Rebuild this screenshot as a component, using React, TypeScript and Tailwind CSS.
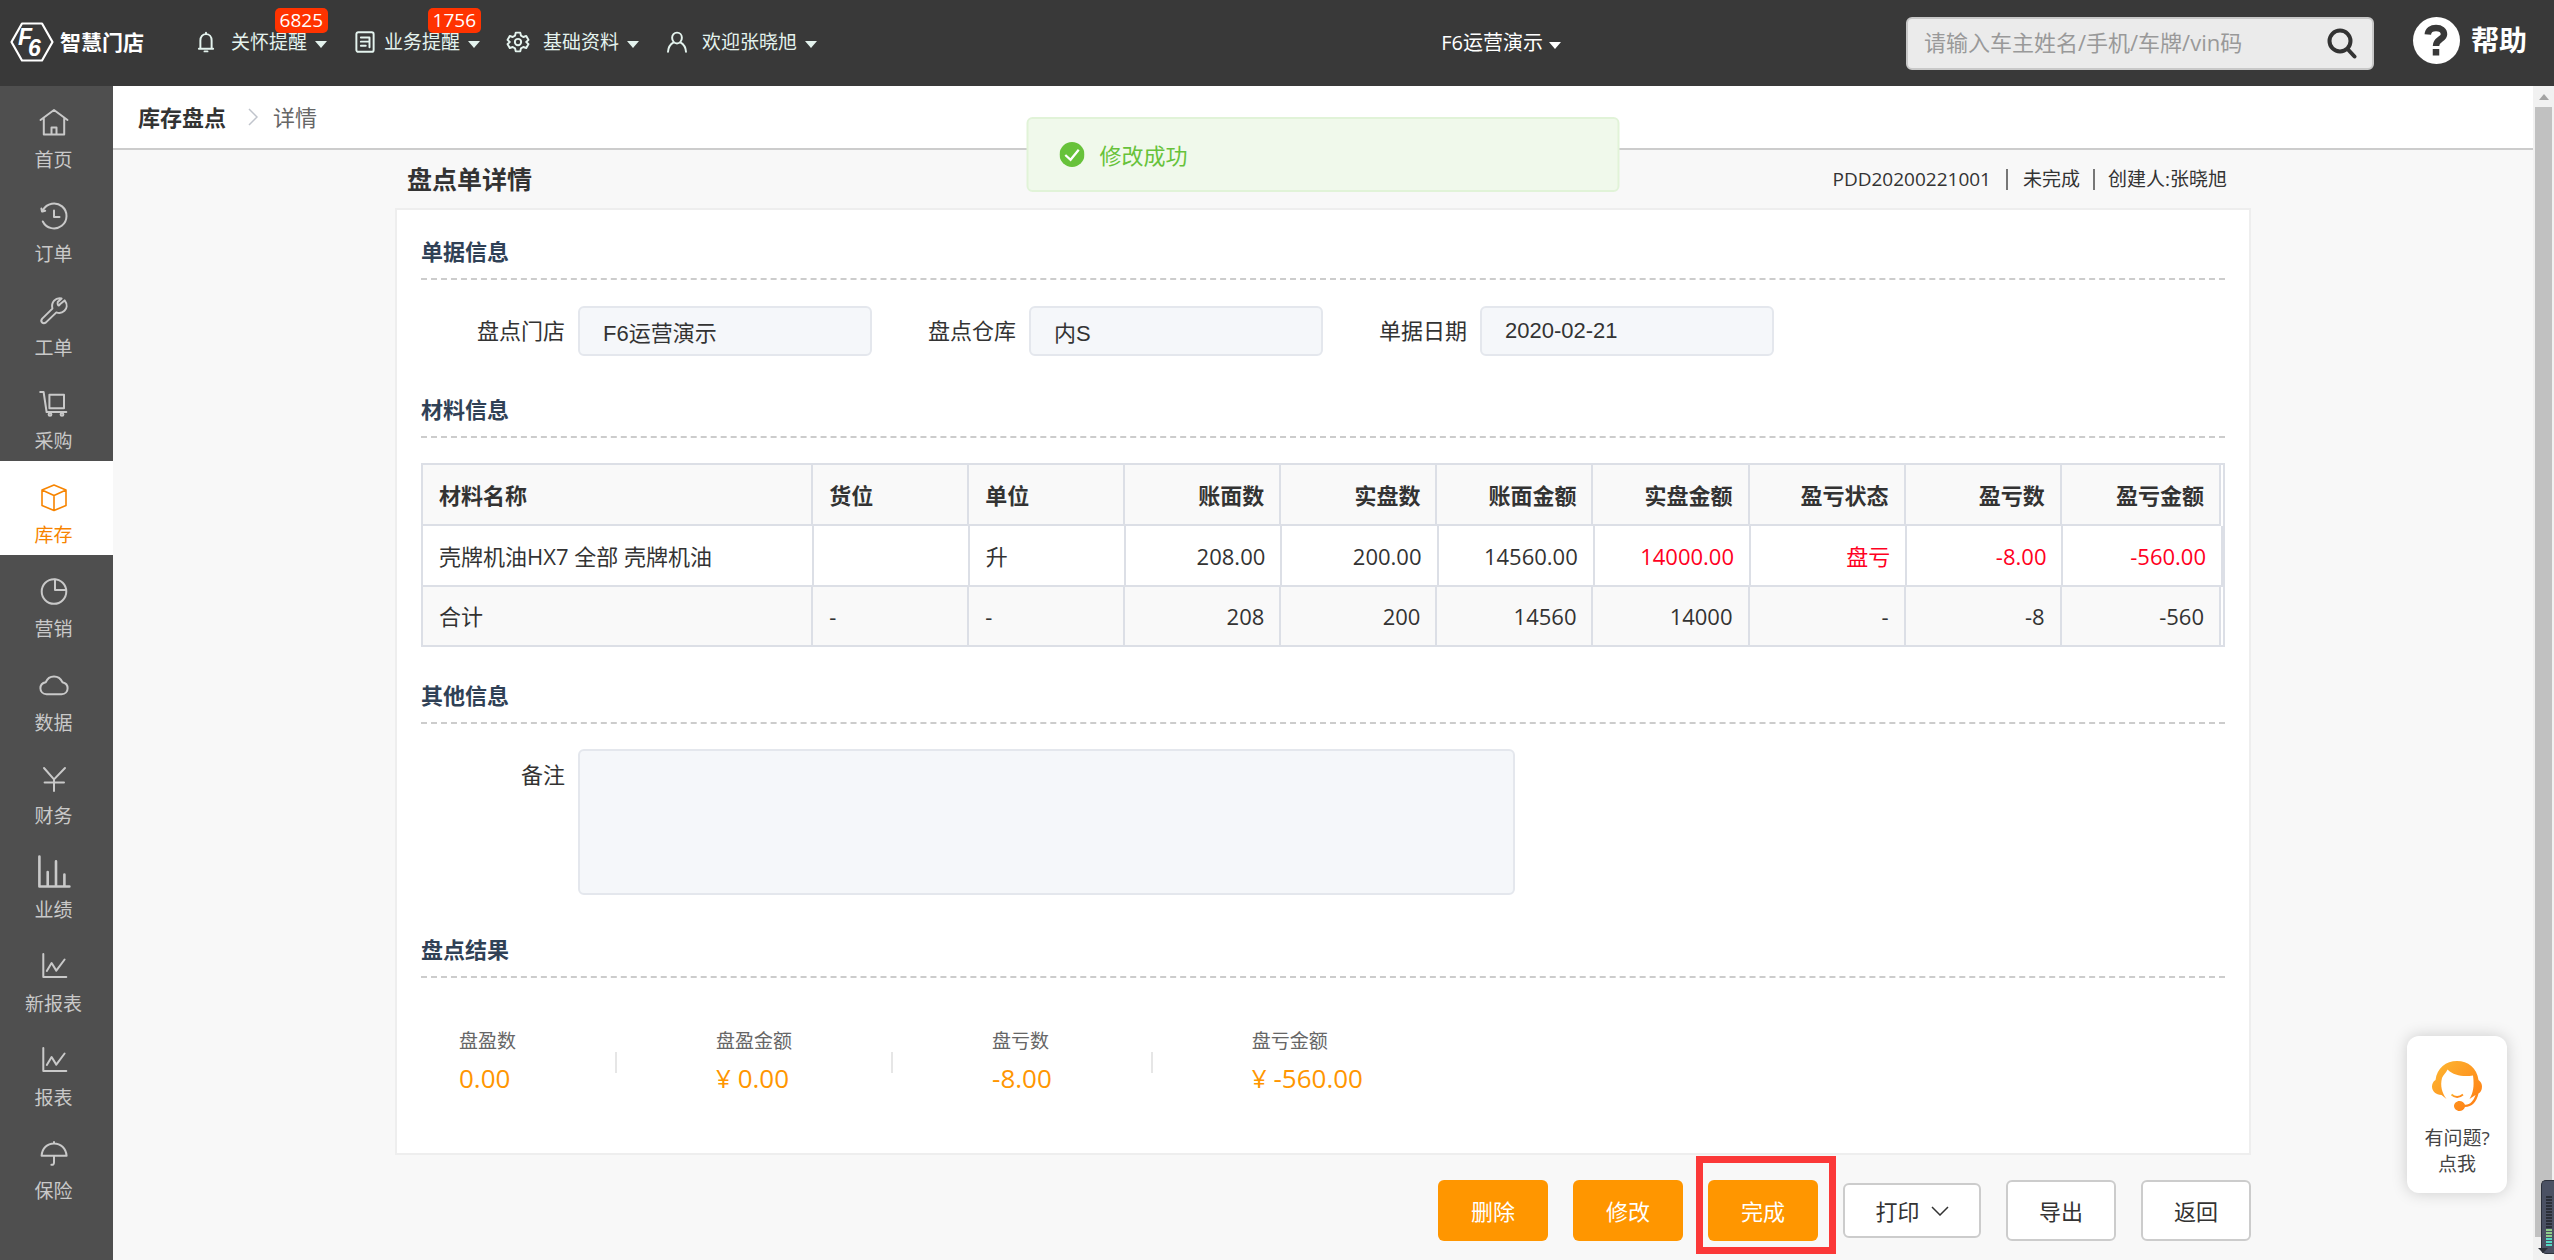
import type { ReactNode } from "react";

const FONT = "font-['Open_Sans','Noto_Sans_CJK_SC',sans-serif]";
const ARIAL = "font-['Liberation_Sans','Noto_Sans_CJK_SC',sans-serif]";

function Line({ children, size = "size-8", width = 2 }: { children: ReactNode; size?: string; width?: number }) {
  return (
    <svg
      viewBox="0 0 32 32"
      className={`${size} shrink-0 overflow-visible`}
      fill="none"
      stroke="currentColor"
      strokeWidth={width}
      strokeLinecap="round"
      strokeLinejoin="round"
      aria-hidden="true"
    >
      {children}
    </svg>
  );
}

function Caret() {
  return <span className="ml-2 mt-1 border-x-[6px] border-t-[7px] border-x-transparent border-t-current" />;
}

const lineChart = (
  <Line>
    <path d="M5.3 3V26H28.3M8.8 20L13.6 12L18.3 19.6L26.6 8.5" />
  </Line>
);

const sideItems: { label: string; icon: ReactNode; active?: boolean }[] = [
  {
    label: "首页",
    icon: (
      <Line>
        <path d="M2.5 13L16 3L29.5 13M5.8 11V27.5H26.2V11M13.5 27.5V20.5H18.5V27.5" />
      </Line>
    ),
  },
  {
    label: "订单",
    icon: (
      <Line>
        <path d="M4.8 20.5A12.5 12.5 0 1 0 5 9M4 10.5L3.4 7.6M4.4 10.6L7.2 9.8M16 9.5V16H21.5" />
      </Line>
    ),
  },
  {
    label: "工单",
    icon: (
      <Line>
        <path d="M22.2 9L26.6 5.4C29.8 9.5 28.8 13.6 26.4 15.8C24.2 17.9 21 18.4 18.4 17.4L8 27.4C5 29.6 1.8 26.6 4.2 23.6L14.4 13.6C12.8 7.2 17.6 2 23.6 3.4L19.8 7C19 10.4 20.6 11.6 22.2 9Z" />
      </Line>
    ),
  },
  {
    label: "采购",
    icon: (
      <Line>
        <path d="M2.2 4H5.6L8.6 24H28.3M11.4 6.8H26V20.2H11.4Z" />
        <circle cx="12" cy="26.4" r="1.4" />
        <circle cx="24" cy="26.4" r="1.4" />
      </Line>
    ),
  },
  {
    label: "库存",
    active: true,
    icon: (
      <Line width={1.6}>
        <path d="M16 3L28 8V23.5L16 28.5L4 23.5V8ZM4 8L16 13.5L28 8M16 13.5V28.5" />
      </Line>
    ),
  },
  {
    label: "营销",
    icon: (
      <Line>
        <circle cx="16" cy="15.5" r="12.3" />
        <path d="M17 3.4V14H28" />
      </Line>
    ),
  },
  {
    label: "数据",
    icon: (
      <Line>
        <path d="M8.6 24.2H23.6C27.4 24.2 29.6 21.4 29.6 18.2C29.6 15 27.4 12.8 24.4 12.2C22.8 8.6 19.8 6.4 16 6.4C12.2 6.4 9.2 8.6 7.8 12.2C4.6 12.8 2.4 15 2.4 18.2C2.4 21.4 4.8 24.2 8.6 24.2Z" />
      </Line>
    ),
  },
  {
    label: "财务",
    icon: (
      <Line>
        <path d="M6 5L16 16.4L27 5M6.6 19.5H26M16 16.4V28" />
      </Line>
    ),
  },
  {
    label: "业绩",
    icon: (
      <Line width={2.6}>
        <path d="M1.4 -0.5V29.5H31.4M9.7 15V29.5M18 4.4V29.5M26.4 17.5V29.5" />
      </Line>
    ),
  },
  { label: "新报表", icon: lineChart },
  { label: "报表", icon: lineChart },
  {
    label: "保险",
    icon: (
      <Line>
        <path d="M3.6 17.8C4 10.4 9.4 5.4 16 5.4S28 10.4 28.6 17.8ZM16 5.2V4M16 17.8V24.5C16 26.4 15 27 13.4 26.8" />
      </Line>
    ),
  },
];

const navItems = [
  {
    label: "关怀提醒",
    gap: "gap-[13px]",
    badge: "6825",
    icon: (
      <Line size="size-6" width={2.6}>
        <path d="M6.5 25H25.5M8.5 25V14C8.5 9 11.5 5.5 16 5.5S23.5 9 23.5 14V25M16 5.5V3.5M14 28.5H18" />
      </Line>
    ),
  },
  {
    label: "业务提醒",
    gap: "gap-[7px]",
    badge: "1756",
    icon: (
      <Line size="size-6" width={2.6}>
        <rect x="4.5" y="3" width="23" height="26" rx="2.5" />
        <path d="M10.5 10H22M10.5 15.5H22M10.5 21H17M22 10V23" />
      </Line>
    ),
  },
  {
    label: "基础资料",
    gap: "gap-[13px]",
    badge: "",
    icon: (
      <Line size="size-6" width={2.6}>
        <path d="M13 3.500H19L20 7.600L23 9.300L27 8L30 13.200L27 16L30 18.800L27 24L23 22.700L20 24.400L19 28.500H13L12 24.400L9 22.700L5 24L2 18.800L5 16L2 13.200L5 8L9 9.300L12 7.600Z" />
        <circle cx="16" cy="16" r="4.200" />
      </Line>
    ),
  },
  {
    label: "欢迎张晓旭",
    gap: "gap-[13px]",
    badge: "",
    icon: (
      <Line size="size-6" width={2.6}>
        <path d="M16 3.500C19.800 3.500 22.500 6.300 22.500 10.300S19.800 18 16 18S9.500 14.300 9.500 10.300S12.200 3.500 16 3.500ZM11.500 16.500C7 19 4.300 23.500 4 29M20.500 16.500C25 19 27.700 23.500 28 29" />
      </Line>
    ),
  },
];

function Header() {
  return (
    <header className="flex h-[86px] shrink-0 items-center bg-[#393939] text-white">
      <div className="flex w-[182px] shrink-0 items-center pb-[2px] pl-[10px]">
        <svg viewBox="0 0 44 40" className="h-10 w-11 shrink-0" fill="none" stroke="#fff" strokeWidth="2.200" strokeLinejoin="round" aria-hidden="true">
          <path d="M12 1.500H32L42.500 20L32 38.500H12L1.500 20Z" />
          <g fill="#fff" stroke="none" fontFamily="Liberation Sans" fontStyle="italic" fontWeight="bold" fontSize="23">
            <text x="8" y="23">F</text>
            <text x="18" y="34">6</text>
          </g>
        </svg>
        <span className="ml-[6px] whitespace-nowrap text-[21px] font-bold leading-6">智慧门店</span>
      </div>
      <nav className="flex items-center gap-[26px] pb-[2px] pl-3 text-[19px] leading-6 text-[#e4f3ee]">
        {navItems.map((item) => (
          <button key={item.label} type="button" className={`relative flex h-6 items-center whitespace-nowrap ${item.gap}`}>
            {item.icon}
            <span className="flex items-center">
              {item.label}
              <Caret />
            </span>
            {item.badge && (
              <span className="absolute -right-px -top-[22px] h-[25px] rounded-[5px] bg-[#ff3300] px-[5px] leading-6 text-white">
                {item.badge}
              </span>
            )}
          </button>
        ))}
      </nav>
      <button type="button" className="ml-auto flex items-center text-[20px] leading-6">
        F6运营演示
        <span className="ml-[6px] mt-1 border-x-[6px] border-t-[7px] border-x-transparent border-t-current" />
      </button>
      <div className="ml-[345px] flex h-[53px] w-[468px] items-center rounded-[6px] border-2 border-[#c8c8c8] bg-[#ebebeb] pl-4 pr-[14px]">
        <input
          type="search"
          aria-label="搜索"
          placeholder="请输入车主姓名/手机/车牌/vin码"
          className="min-w-0 flex-1 bg-transparent pb-[2px] text-[22px] leading-8 text-[#333] outline-none placeholder:text-[#999]"
        />
        <button type="button" aria-label="搜索" className="text-[#333]">
          <svg viewBox="0 0 32 32" className="size-8" fill="none" stroke="currentColor" strokeWidth="4" strokeLinecap="round" aria-hidden="true">
            <circle cx="14" cy="14" r="10.500" />
            <path d="M22 22.500L28.500 29.500" />
          </svg>
        </button>
      </div>
      <a href="#help" className="ml-[39px] mr-[27px] flex items-center gap-[11px] pb-[6px] text-[28px] font-bold leading-10">
        <span className="flex size-[47px] items-center justify-center rounded-full bg-white text-[#393939]">
          <svg viewBox="0 0 24 32" className="h-8 w-6" fill="none" stroke="currentColor" strokeWidth="6.500" aria-hidden="true">
            <path d="M3.800 10.500C4 6 7.500 4 12 4C17 4 20 6.500 20 10.200C20 15.500 12 15 12 22M12 25V31.500" />
          </svg>
        </span>
        帮助
      </a>
    </header>
  );
}

function Sidebar() {
  return (
    <aside className="w-[113px] shrink-0 overflow-hidden bg-[#4f4f4f]">
      <nav className="flex h-[1125px] flex-col">
        {sideItems.map((item) => (
          <a
            key={item.label}
            href="#nav"
            className={`flex flex-1 flex-col items-center gap-[9px] pr-[6px] pt-[21px] text-[19px] leading-6 ${
              item.active ? "bg-white text-[#f78400]" : "text-[#c9c9c9]"
            }`}
          >
            {item.icon}
            {item.label}
          </a>
        ))}
      </nav>
    </aside>
  );
}

function SectionTitle({ children }: { children: ReactNode }) {
  return (
    <h2 className="border-b-2 border-dashed border-[#ccc] pb-3 text-[22px] font-bold leading-[30px] text-[#304156]">
      {children}
    </h2>
  );
}

function Field({ id, label, value }: { id: string; label: string; value: string }) {
  return (
    <div className="flex items-center">
      <label htmlFor={id} className="w-[157px] shrink-0 pb-[2px] pr-[13px] text-right text-[22px] leading-8">
        {label}
      </label>
      <input
        id={id}
        readOnly
        value={value}
        className={`h-[50px] min-w-0 flex-1 rounded-[6px] border-2 border-[#e4e7ed] bg-[#f5f7fa] px-[23px] text-[22px] text-[#333] outline-none ${ARIAL}`}
      />
    </div>
  );
}

const columns = ["材料名称", "货位", "单位", "账面数", "实盘数", "账面金额", "实盘金额", "盈亏状态", "盈亏数", "盈亏金额"];
const dataRow = ["壳牌机油HX7 全部 壳牌机油", "", "升", "208.00", "200.00", "14560.00", "14000.00", "盘亏", "-8.00", "-560.00"];
const totalRow = ["合计", "-", "-", "208", "200", "14560", "14000", "-", "-8", "-560"];

function Cols() {
  return (
    <colgroup>
      {columns.map((c, i) => (
        <col key={c} className={i === 0 ? "w-[21.7%]" : i === 9 ? "" : "w-[8.68%]"} />
      ))}
    </colgroup>
  );
}

function cellClass(i: number) {
  return `whitespace-nowrap border-r-2 border-[#dcdfe6] pl-4 pr-[15px] ${i > 2 ? "text-right" : "text-left"}`;
}

function MaterialTable() {
  return (
    <div className="mt-[25px] border-2 border-[#dcdfe6] text-[22px] leading-8">
      <div className="pr-[2px]">
        <table className="w-full table-fixed border-separate border-spacing-0 bg-[#f9f9f9]">
          <Cols />
          <thead>
            <tr>
              {columns.map((c, i) => (
                <th key={c} scope="col" className={`h-[61px] border-b-2 font-bold ${cellClass(i)}`}>
                  {c}
                </th>
              ))}
            </tr>
          </thead>
        </table>
      </div>
      <table className="w-full table-fixed border-separate border-spacing-0">
        <Cols />
        <tbody>
          <tr>
            {dataRow.map((c, i) => (
              <td key={columns[i]} className={`h-[61px] border-b-2 ${cellClass(i)} ${i > 5 ? "text-[#ff0022]" : ""}`}>
                {c}
              </td>
            ))}
          </tr>
        </tbody>
      </table>
      <div className="pr-[2px]">
        <table className="w-full table-fixed border-separate border-spacing-0 bg-[#f9f9f9]">
          <Cols />
          <tbody>
            <tr>
              {totalRow.map((c, i) => (
                <td key={columns[i]} className={`h-[58px] ${cellClass(i)}`}>
                  {c}
                </td>
              ))}
            </tr>
          </tbody>
        </table>
      </div>
    </div>
  );
}

const results = [
  { label: "盘盈数", value: "0.00" },
  { label: "盘盈金额", value: "¥ 0.00" },
  { label: "盘亏数", value: "-8.00" },
  { label: "盘亏金额", value: "¥ -560.00" },
];

function Results() {
  return (
    <dl className="flex items-center pb-[54px] pl-[38px] pt-[47px]">
      {results.map((r, i) => (
        <div key={r.label} className="flex items-center">
          {i > 0 && <span className="mx-[99px] h-[21px] w-[2px] bg-[#e6e6e6]" />}
          <div>
            <dt className="text-[19px] leading-8 text-[#666]">{r.label}</dt>
            <dd className="text-[26px] leading-[42px] text-[#ff9600]">{r.value}</dd>
          </div>
        </div>
      ))}
    </dl>
  );
}

const primary = "h-[61px] w-[110px] rounded-[6px] bg-[#ff9600] text-white";
const plain = "rounded-[6px] border-2 border-[#ccc] bg-white text-[#333]";

function Actions() {
  return (
    <div className="mt-[25px] flex items-center justify-end gap-[25px] text-[22px] leading-8">
      <button type="button" className={primary}>删除</button>
      <button type="button" className={primary}>修改</button>
      <div className="relative">
        <button type="button" className={primary}>完成</button>
        <span className="pointer-events-none absolute -bottom-[13px] -left-3 -right-[18px] -top-6 border-[7px] border-[#fb3838]" />
      </div>
      <button type="button" className={`flex h-[55px] w-[138px] items-center justify-center gap-[11px] ${plain}`}>
        打印
        <svg viewBox="0 0 18 10" className="h-[10px] w-[18px]" fill="none" stroke="currentColor" strokeWidth="1.500" aria-hidden="true">
          <path d="M1 1L9 9L17 1" />
        </svg>
      </button>
      <button type="button" className={`h-[61px] w-[110px] ${plain}`}>导出</button>
      <button type="button" className={`h-[61px] w-[110px] ${plain}`}>返回</button>
    </div>
  );
}

function HelpCard() {
  return (
    <a
      href="#service"
      className="absolute bottom-[67px] right-[26px] flex h-[157px] w-[100px] flex-col items-center rounded-[12px] bg-white pt-[25px] text-center text-[19px] leading-[26px] text-[#444] shadow-[0_0_16px_rgba(0,0,0,0.18)]"
    >
      <svg viewBox="0 0 50 50" className="size-[50px]" aria-hidden="true">
        <defs>
          <linearGradient id="agent" x1="0" y1="0" x2="1" y2="1">
            <stop offset="0" stopColor="#fdb933" />
            <stop offset="1" stopColor="#ff7a12" />
          </linearGradient>
        </defs>
        <path
          fill="url(#agent)"
          d="M3.500 19C5 7 14 0 25 0S45 7 46.500 19C49 21 50 23 50 25.500C50 29 48.500 31.500 46.500 32.500C44.500 41 40 46 33 46C32 48.500 30 50 27.500 50C24.500 50 22 47.500 22 45S24.500 40 27.500 40C30 40 32 41.500 33 43.700C38 44 41.500 40 43.500 34L37.500 38C41 32 42.500 26 41 14.500C32 16 22 15 15.500 8.500C14 12 11 14 10 17C8 25 10 32 14.500 38L9.500 34C4 34 0 30 0 25.500C0 23 1 20.500 3.500 19Z"
        />
        <path d="M19.500 33.500Q25 38.500 31 33.500" fill="none" stroke="url(#agent)" strokeWidth="1.800" />
      </svg>
      <span className="mt-[14px]">有问题?</span>
      <span>点我</span>
    </a>
  );
}

const meterBars = Array.from({ length: 17 }, (_, i) => i);

function Scrollbar() {
  return (
    <div className="relative flex w-[21px] shrink-0 flex-col items-center bg-[#f1f1f1] pb-[23px]" aria-hidden="true">
      <span className="my-[7px] h-[7px] border-x-[5px] border-b-[6px] border-x-transparent border-b-[#a3a3a3]" />
      <span className="w-[17px] flex-1 bg-[#c1c1c1]" />
      <span className="absolute bottom-[6px] right-0 flex h-[74px] w-[13px] flex-col justify-end gap-[1px] rounded-l-[5px] border border-r-0 border-[#2c303b] bg-[#4b5163] pb-[7px] pl-1">
        {meterBars.map((i) => (
          <span key={i} className={`h-[2px] w-[6px] shrink-0 ${i < 11 ? "bg-[#2b2f38]" : i < 14 ? "bg-[#8fce8a]" : "bg-[#55d8c4]"}`} />
        ))}
      </span>
      <span className="absolute bottom-[7px] right-[6px] border-x-[5px] border-t-[5px] border-x-transparent border-t-[#2b2f38]" />
    </div>
  );
}

export default function App() {
  return (
    <div className={`flex h-screen flex-col overflow-hidden bg-[#f8f8f8] text-[#333] ${FONT}`}>
      <Header />
      <div className="flex min-h-0 flex-1">
        <Sidebar />
        <main className="relative min-w-0 flex-1 overflow-hidden">
          <div className="flex h-16 items-center border-b-2 border-[#ccc] bg-white pl-[25px] text-[22px] leading-8">
            <a href="#inventory" className="font-bold">库存盘点</a>
            <svg viewBox="0 0 10 18" className="ml-[22px] mr-[15px] h-[18px] w-[10px]" fill="none" stroke="#c0c4cc" strokeWidth="1.500" aria-hidden="true">
              <path d="M1 1L9 9L1 17" />
            </svg>
            <span className="text-[#666]">详情</span>
          </div>
          <div className="mx-auto w-full max-w-[1856px]">
            <div className="flex h-[58px] items-center justify-between pl-3 pr-6">
              <h1 className="text-[25px] font-bold leading-8">盘点单详情</h1>
              <p className="flex items-center text-[19px] leading-6">
                PDD20200221001
                <span className="mx-[15px] h-[21px] w-[2px] bg-[#777]" />
                未完成
                <span className="mx-[13px] h-[21px] w-[2px] bg-[#777]" />
                创建人:张晓旭
              </p>
            </div>
            <section className="border-2 border-[#eee] bg-white px-6 pt-[26px]">
              <SectionTitle>单据信息</SectionTitle>
              <div className="mb-[38px] mt-[26px] grid grid-cols-4">
                <Field id="store" label="盘点门店" value="F6运营演示" />
                <Field id="warehouse" label="盘点仓库" value="内S" />
                <Field id="date" label="单据日期" value="2020-02-21" />
              </div>
              <SectionTitle>材料信息</SectionTitle>
              <div className="mb-[33px]">
                <MaterialTable />
              </div>
              <SectionTitle>其他信息</SectionTitle>
              <div className="mb-[39px] mt-[25px] flex items-start">
                <label htmlFor="remark" className="w-[157px] shrink-0 pr-[13px] pt-[9px] text-right text-[22px] leading-8">
                  备注
                </label>
                <textarea
                  id="remark"
                  readOnly
                  className="h-[146px] w-full max-w-[937px] resize-none rounded-[6px] border-2 border-[#e4e7ed] bg-[#f5f7fa] outline-none"
                />
              </div>
              <SectionTitle>盘点结果</SectionTitle>
              <Results />
            </section>
            <Actions />
          </div>
          <div
            role="status"
            className="absolute left-1/2 top-[31px] flex h-[75px] w-[593px] -translate-x-1/2 items-center gap-[15px] rounded-[6px] border-2 border-[#e1f3d8] bg-[#f0f9eb] pl-[31px] text-[22px] leading-8 text-[#67c23a]"
          >
            <svg viewBox="0 0 26 26" className="size-[25px]" aria-hidden="true">
              <circle cx="13" cy="13" r="13" fill="#67c23a" />
              <path d="M6 13.500L11.500 18.500L20 8" fill="none" stroke="#fff" strokeWidth="2.400" />
            </svg>
            修改成功
          </div>
          <HelpCard />
        </main>
        <Scrollbar />
      </div>
    </div>
  );
}
